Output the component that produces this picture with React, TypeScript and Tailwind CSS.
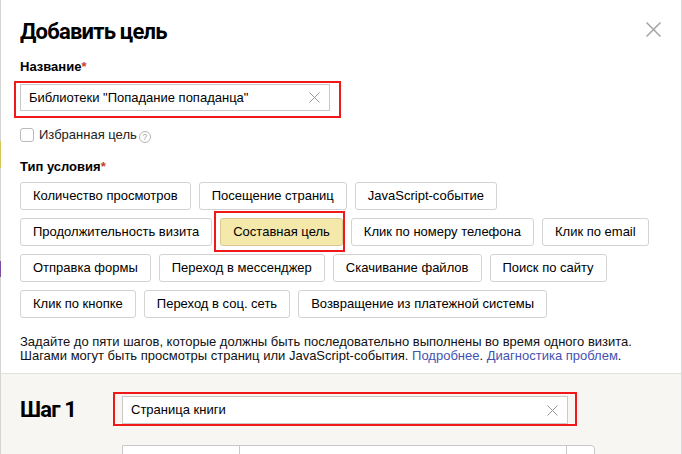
import React from "react";

const rows: string[][] = [
  ["Количество просмотров", "Посещение страниц", "JavaScript-событие"],
  ["Продолжительность визита", "Составная цель", "Клик по номеру телефона", "Клик по email"],
  ["Отправка формы", "Переход в мессенджер", "Скачивание файлов", "Поиск по сайту"],
  ["Клик по кнопке", "Переход в соц. сеть", "Возвращение из платежной системы"],
];

const ClearIcon = () => (
  <svg width="11" height="11" viewBox="0 0 11 11" className="shrink-0">
    <path d="M0.5 0.5 L10.5 10.5 M10.5 0.5 L0.5 10.5" stroke="#9a9a9a" strokeWidth="1" />
  </svg>
);

const TextInput = ({ value, className }: { value: string; className: string }) => (
  <div
    className={`h-[27px] flex items-center justify-between pl-[8px] pr-[9px] bg-white border border-[#c9c9c9] text-[13px] text-black ${className}`}>
    <span>{value}</span>
    <ClearIcon />
  </div>
);

const Required = () => <span className="text-[#cc3d2a]">*</span>;

export default function App() {
  return (
    <div className="w-[682px] h-[454px] overflow-hidden flex bg-white font-['Liberation_Sans',Arial,sans-serif]">
      {/* page behind the modal */}
      <div className="w-[1px] flex flex-col bg-[#d4d4d4]">
        <div className="h-[141px]" />
        <div className="h-[27px] bg-[#d9c55a]" />
        <div className="h-[93px]" />
        <div className="h-[16px] bg-[#7a4fa0]" />
      </div>

      <div className="flex-1 flex flex-col border-r border-[#d9d9d9]">
        <div className="pl-[19px] pr-[20px] pt-[19px] pb-[10px] border-b border-[#e2e1dd]">
          <div className="flex justify-between items-start">
            <div className="text-[22px] leading-[26px] font-bold tracking-[-0.8px] text-black font-['Roboto',sans-serif]">
              Добавить цель
            </div>
            <svg width="15" height="15" viewBox="0 0 15 15" className="mt-[3px]">
              <path d="M0.5 0.5 L14.5 14.5 M14.5 0.5 L0.5 14.5" stroke="#a3a3a3" strokeWidth="1.5" />
            </svg>
          </div>

          <div className="mt-[14px] text-[13px] leading-[16px] font-bold text-black">
            Название
            <Required />
          </div>

          <div className="relative mt-[9px] w-[310px]">
            <TextInput value={'Библиотеки "Попадание попаданца"'} className="w-full" />
            <div className="absolute left-[-6px] top-[-3px] right-[-11px] bottom-[-7px] border-2 border-[#f01818]" />
          </div>

          <div className="mt-[16px] flex items-center h-[16px] text-[13px] text-[#222]">
            <div className="w-[14px] h-[14px] rounded-[3px] border border-[#b9b9b9] bg-white mr-[5px]" />
            <span>Избранная цель</span>
            <span className="ml-[2px] mt-[3px] w-[12px] h-[12px] rounded-full border border-[#b5b5b5] text-[#aaa] text-[9px] leading-[10px] flex items-center justify-center">
              ?
            </span>
          </div>

          <div className="mt-[16px] text-[13px] leading-[16px] font-bold text-black">
            Тип условия
            <Required />
          </div>

          <div className="mt-[7px] flex flex-col gap-[8px]">
            {rows.map((row, i) => (
              <div key={i} className="flex gap-[8px]">
                {row.map((label) => {
                  const active = label === "Составная цель";
                  return (
                    <div key={label} className={active ? "relative" : ""}>
                      <div
                        className={`h-[28px] px-[12px] flex items-center rounded-[3px] border text-[13px] text-black whitespace-nowrap ${
                          active ? "bg-[#f4e8ab] border-[#d8c98e]" : "bg-white border-[#d3d3d3]"
                        }`}>
                        {label}
                      </div>
                      {active && (
                        <div className="absolute left-[-6px] top-[-7px] right-[-2px] bottom-[-6px] border-2 border-[#f01818]" />
                      )}
                    </div>
                  );
                })}
              </div>
            ))}
          </div>

          <div className="mt-[17px] text-[13px] leading-[14px] text-[#111]">
            <div>Задайте до пяти шагов, которые должны быть последовательно выполнены во время одного визита.</div>
            <div>
              Шагами могут быть просмотры страниц или JavaScript-события.{" "}
              <span className="text-[#4352b0]">Подробнее</span>.{" "}
              <span className="text-[#4352b0]">Диагностика проблем</span>.
            </div>
          </div>
        </div>

        <div className="flex-1 bg-[#f7f6f3] pl-[19px] pt-[22px]">
          <div className="flex items-start">
            <div className="w-[102px] text-[22px] leading-[28px] font-bold tracking-[-0.8px] text-black font-['Roboto',sans-serif]">
              Шаг 1
            </div>
            <div className="relative w-[446px]">
              <TextInput value="Страница книги" className="w-full h-[28px]" />
              <div className="absolute left-[-9px] top-[-4px] right-[-9px] bottom-[-2px] border-2 border-[#f01818]" />
            </div>
          </div>
          <div className="mt-[21px] ml-[102px] flex w-[473px] h-[28px] bg-white border border-[#c9c9c9] rounded-tr-[4px]">
            <div className="w-[117px] border-r border-[#c9c9c9]" />
            <div className="flex-1 border-r border-[#c9c9c9]" />
            <div className="w-[27px]" />
          </div>
        </div>
      </div>
    </div>
  );
}
